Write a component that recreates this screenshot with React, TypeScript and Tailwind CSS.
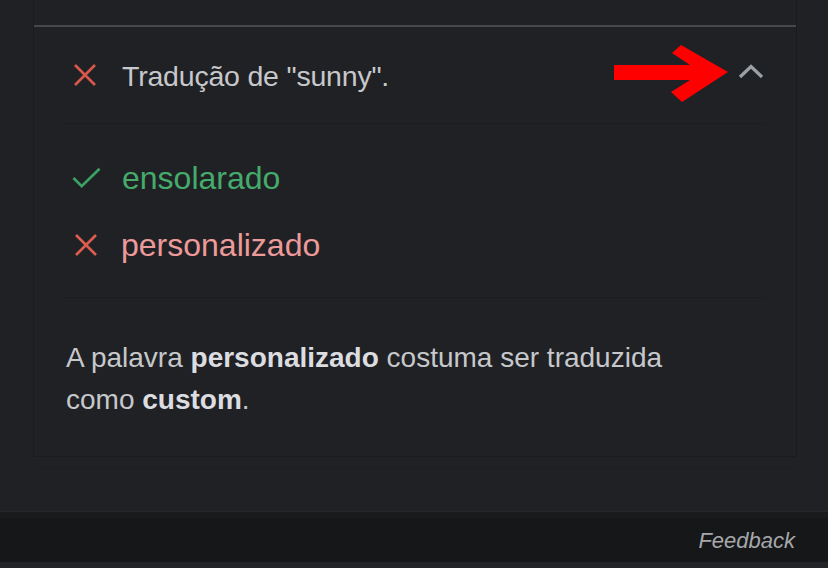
import React from "react";

const XIcon: React.FC<{ className?: string }> = ({ className }) => (
  <svg viewBox="0 0 24 24" className={className} fill="none">
    <path d="M2 2 L22 22 M22 2 L2 22" stroke="currentColor" strokeWidth="2.6" strokeLinecap="butt" />
  </svg>
);

const CheckIcon: React.FC<{ className?: string }> = ({ className }) => (
  <svg viewBox="0 0 30 22" className={className} fill="none">
    <path d="M1.5 11 L10 19.5 L28.5 1.5" stroke="currentColor" strokeWidth="2.8" />
  </svg>
);

const ChevronUp: React.FC<{ className?: string }> = ({ className }) => (
  <svg viewBox="0 0 26 16" className={className} fill="none">
    <path d="M2 14 L13 3.5 L24 14" stroke="currentColor" strokeWidth="3.2" />
  </svg>
);

// Red annotation arrow pointing at the chevron
const RedArrow: React.FC<{ className?: string }> = ({ className }) => (
  <svg viewBox="0 0 116 58" className={className}>
    <polygon
      points="0,20 76,20 58,8 67,0 114,27 68,57 57,47 76,35 0,35"
      fill="#ff0000"
    />
  </svg>
);

export default function App() {
  return (
    <div className="w-[828px] h-[568px] bg-[#202125] flex flex-col overflow-hidden font-['Liberation_Sans',Arial,sans-serif]">
      {/* Page area */}
      <div className="h-[512px] flex flex-col">
        <div className="ml-[33px] w-[764px] h-[457px] border-x border-b border-[#1a1b1e] flex flex-col">
          <div className="h-[25px]" />
          <div className="h-[2px] bg-[#46484c]" />

          {/* Question header */}
          <div className="relative h-[96px] flex items-center pl-[39px]">
            <XIcon className="w-[24px] h-[24px] text-[#d9574b]" />
            <span className="ml-[25px] mt-[3px] text-[28.5px] text-[#c6c8cb] tracking-[-0.2px]">
              Tradução de "sunny".
            </span>
            <div className="absolute left-[580px] top-[18px]">
              <RedArrow className="w-[116px] h-[58px]" />
            </div>
            <ChevronUp className="absolute left-[704px] top-[36px] w-[26px] h-[16px] text-[#9aa0a6]" />
          </div>
          <div className="mx-[29px] h-px bg-[#1c1d20]" />

          {/* Answers */}
          <div className="h-[173px] flex flex-col pt-[20px] pl-[38px]">
            <div className="h-[67px] flex items-center">
              <CheckIcon className="w-[29px] h-[22px] text-[#3aa362]" />
              <span className="ml-[21px] text-[32px] text-[#45ab6b]">ensolarado</span>
            </div>
            <div className="h-[67px] flex items-center pl-[2px]">
              <XIcon className="w-[24px] h-[24px] text-[#dc5c4f]" />
              <span className="ml-[23px] text-[32px] text-[#ec9a9a]">personalizado</span>
            </div>
          </div>
          <div className="mx-[29px] h-px bg-[#1c1d20]" />

          {/* Explanation */}
          <div className="pt-[39px] pl-[32px] text-[28px] leading-[42px] text-[#c6c8cb]">
            <p>
              A palavra <b className="font-bold text-[#dcdde0]">personalizado</b> costuma ser traduzida
            </p>
            <p>
              como <b className="font-bold text-[#dcdde0]">custom</b>.
            </p>
          </div>
        </div>
        <div className="mt-[11px] ml-[40px] w-[752px] h-px bg-[#1d1e21]" />
        <div className="flex-1" />
        <div className="h-px bg-[#26272a]" />
      </div>

      {/* Footer */}
      <div className="h-[6px] bg-[#1a1b1c]" />
      <div className="h-[44px] bg-[#161718] flex items-center justify-end pr-[33px]">
        <span className="italic text-[22px] text-[#a6a8ab]">Feedback</span>
      </div>
      <div className="flex-1 bg-[#232427]" />
    </div>
  );
}
